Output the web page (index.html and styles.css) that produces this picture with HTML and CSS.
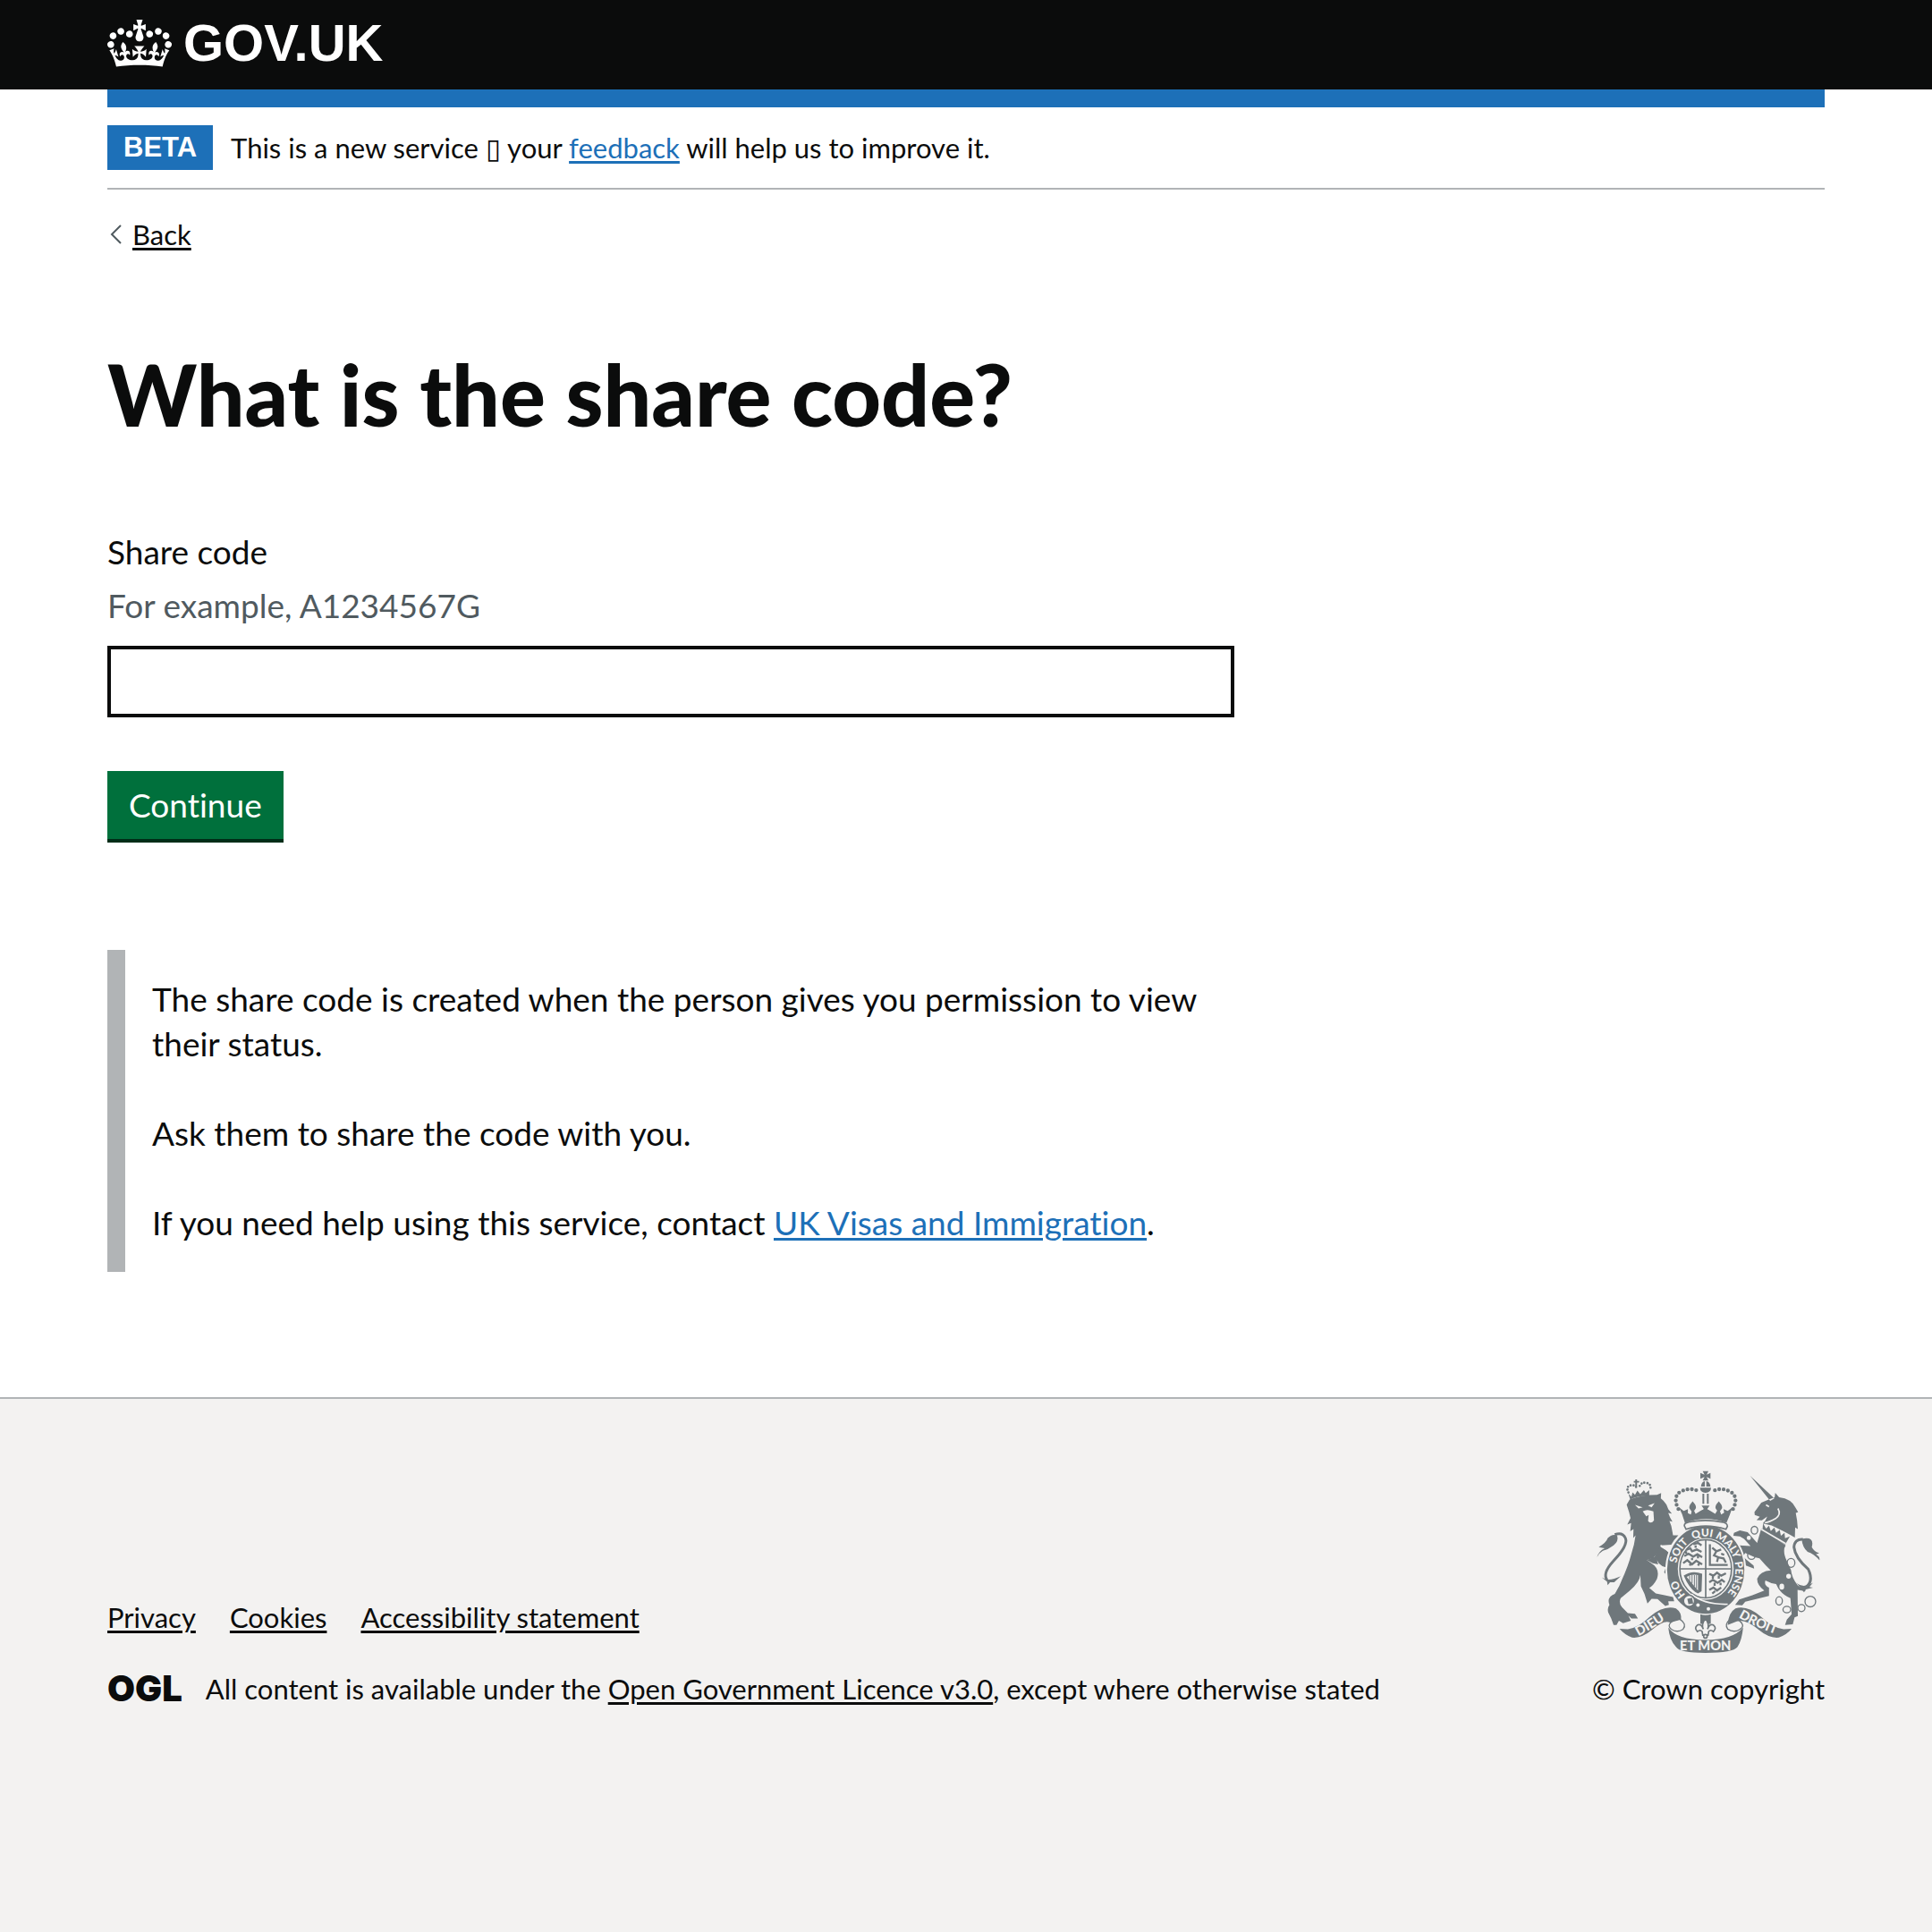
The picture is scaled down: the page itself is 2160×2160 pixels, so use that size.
FILE: index.html
```html
<!DOCTYPE html>
<html lang="en">
<head>
<meta charset="utf-8">
<meta name="viewport" content="width=device-width, initial-scale=1">
<title>What is the share code? - GOV.UK</title>
<link rel="stylesheet" href="styles.css">
</head>
<body>
<header class="header">
  <div class="container">
    <a class="header-logo" href="#">
      <svg class="crown" viewBox="0 0 132 97" aria-hidden="true"><path fill="currentColor" d="M25 30.2c3.5 1.5 7.7-.2 9.1-3.7 1.5-3.6-.2-7.8-3.9-9.2-3.6-1.4-7.6.3-9.1 3.9-1.4 3.5.3 7.5 3.9 9zM9 39.5c3.6 1.5 7.8-.2 9.2-3.7 1.5-3.6-.2-7.8-3.9-9.1-3.6-1.5-7.6.2-9.1 3.8-1.4 3.5.3 7.5 3.8 9zM4.4 57.2c3.5 1.5 7.7-.2 9.1-3.8 1.5-3.6-.2-7.7-3.9-9.1-3.5-1.5-7.6.3-9.1 3.8-1.4 3.5.3 7.6 3.9 9.1zm38.3-21.4c3.5 1.5 7.7-.2 9.1-3.8 1.5-3.6-.2-7.7-3.9-9.1-3.6-1.5-7.6.3-9.1 3.8-1.3 3.6.4 7.7 3.9 9.1zm64.4-5.6c-3.6 1.5-7.8-.2-9.1-3.7-1.5-3.6.2-7.8 3.8-9.2 3.6-1.4 7.7.3 9.2 3.9 1.3 3.5-.4 7.5-3.9 9zm15.9 9.3c-3.6 1.5-7.7-.2-9.1-3.7-1.5-3.6.2-7.8 3.7-9.1 3.6-1.5 7.7.2 9.2 3.8 1.5 3.5-.3 7.5-3.8 9zm4.7 17.7c-3.6 1.5-7.8-.2-9.2-3.8-1.5-3.6.2-7.7 3.9-9.1 3.6-1.5 7.7.3 9.2 3.8 1.3 3.5-.4 7.6-3.9 9.1zM89.3 35.8c-3.6 1.5-7.8-.2-9.2-3.8-1.4-3.6.2-7.7 3.9-9.1 3.6-1.5 7.7.3 9.2 3.8 1.4 3.6-.3 7.7-3.9 9.1zM69.7 17.7l8.9 4.7V9.3l-8.9 2.8c-.2-.3-.5-.6-.9-.9L72.4 0H59.6l3.5 11.2c-.3.3-.6.5-.9.9l-8.8-2.8v13.1l8.8-4.7c.3.3.6.7.9.9l-5 15.4v.1c-.2.8-.4 1.6-.4 2.4 0 4.1 3.1 7.5 7 8.1h.2c.3 0 .7.1 1 .1.4 0 .7 0 1-.1h.2c4-.6 7.1-4.1 7.1-8.1 0-.8-.1-1.7-.4-2.4V34l-5.1-15.4c.4-.2.7-.6 1-.9zM66 92.8c16.9 0 32.8 1.1 47.1 3.2 4-16.9 8.9-26.7 14-33.5l-9.6-3.4c1 4.9 1.1 7.2 0 10.2-1.5-1.4-3-4.3-4.2-8.7L108.6 76c2.8-2 5-3.2 7.5-3.3-4.4 9.4-10 11.9-13.6 11.2-4.3-.8-6.3-4.6-5.6-7.9 1-4.7 5.7-5.9 8-.5 4.3-8.7-3-11.4-7.6-8.8 7.1-7.2 7.9-13.5 2.1-21.1-8 6.1-8.1 12.3-4.5 20.8-4.7-5.4-12.1-2.5-9.5 6.2 3.4-5.2 7.9-2 7.2 3.1-.6 4.3-6.4 7.8-13.5 7.2-10.3-.9-10.9-8-11.2-13.8 2.5-.5 7.1 1.8 11 7.3L80.2 60c-4.1 4.4-8 5.3-12.3 5.4 1.4-4.4 8-11.6 8-11.6H55.5s6.4 7.2 7.9 11.6c-4.2-.1-8-1-12.3-5.4l1.4 16.4c3.9-5.5 8.5-7.7 10.9-7.3-.3 5.8-.9 12.8-11.1 13.8-7.2.6-12.9-2.9-13.5-7.2-.7-5 3.8-8.3 7.1-3.1 2.7-8.7-4.6-11.6-9.4-6.2 3.7-8.5 3.6-14.7-4.6-20.8-5.8 7.6-5 13.9 2.2 21.1-4.7-2.6-11.9.1-7.7 8.8 2.3-5.5 7.1-4.2 8.1.5.7 3.3-1.3 7.1-5.7 7.9-3.5.7-9-1.8-13.5-11.2 2.5.1 4.7 1.3 7.5 3.3l-4.7-15.4c-1.2 4.4-2.7 7.2-4.3 8.7-1.1-3-.9-5.3 0-10.2l-9.5 3.4c5 6.9 9.9 16.7 14 33.5 14.8-2.1 30.8-3.2 47.7-3.2z"/></svg>
      <span>GOV.UK</span>
    </a>
  </div>
</header>

<div class="page container">
  <div class="phase-banner">
    <strong class="tag">BETA</strong>
    <span>This is a new service <span class="missing">▯</span> your <a class="link" href="#">feedback</a> will help us to improve it.</span>
  </div>

  <a class="back" href="#">
    <svg class="back-arrow" viewBox="0 0 14 24" aria-hidden="true"><path d="M13 2 3 12l10 10" fill="none" stroke="currentColor" stroke-width="2"/></svg>
    <span class="back-text">Back</span>
  </a>

  <main class="content">
    <h1 class="title">What is the share code?</h1>
    <form class="form">
      <label class="label" for="share-code">Share code</label>
      <div class="hint" id="share-code-hint">For example, A1234567G</div>
      <input class="input" id="share-code" name="share-code" type="text" aria-describedby="share-code-hint">
      <button class="button" type="button">Continue</button>
    </form>
    <div class="inset">
      <p>The share code is created when the person gives you permission to view their status.</p>
      <p>Ask them to share the code with you.</p>
      <p>If you need help using this service, contact <a class="link" href="#">UK Visas and Immigration</a>.</p>
    </div>
  </main>
</div>

<footer class="footer">
  <div class="container footer-row">
    <div class="footer-meta">
      <nav class="footer-links" aria-label="Support links">
        <a href="#">Privacy</a>
        <a href="#">Cookies</a>
        <a href="#">Accessibility statement</a>
      </nav>
      <div class="licence">
        <span class="ogl">OGL</span>
        <span>All content is available under the <a href="#">Open Government Licence v3.0</a>, except where otherwise stated</span>
      </div>
    </div>
    <div class="copyright">
      <svg class="crest" viewBox="72 70 750 614" aria-hidden="true">
        <defs>
          <path id="garter" d="M438 518A100 113 0 0 1 438 292A100 113 0 0 1 438 518"/>
          <path id="dieu" d="M212 627Q255 605 325 557"/>
          <path id="droit" d="M548 564Q600 595 700 630"/>
        </defs>
        <!-- lion -->
        <g transform="translate(60 60)">
          <path class="ink" d="M112 125 122 108Q160 92 214 92L228 86 227 104Q238 112 246 125L252 140 264 155 252 153 258 168 266 182 256 180Q264 198 265 212L268 228 286 228 272 244 262 260 228 262Q218 290 200 305L180 312 192 320Q226 340 214 375 202 398 188 405L210 424 240 430 268 436 272 450 252 450 254 462 242 466 216 443 196 442 182 458 172 425 160 400 158 362Q156 385 122 415L92 440Q84 455 96 470L116 490 140 492 150 508 128 508 118 498 126 516 100 524 86 516 78 530 68 530 60 508 50 488Q46 474 54 462 44 436 72 425 88 400 95 380 118 330 128 290 138 260 142 228L134 237 135 207 124 215 127 187 114 192 125 170 120 150z"/>
          <path class="ink" d="M224 266Q272 292 282 322L288 352 284 372 274 362 266 370 258 356 246 362 238 352 244 336 232 332 220 322 214 312 218 326 200 322 180 312 206 300z"/>
          <path class="paper-line" d="M226 262Q266 282 292 334"/>
          <path class="paper" d="M140 126 166 134 152 138zM184 128 206 120 196 134zM166 148Q180 138 202 148L204 178Q194 192 184 180L186 160 178 164z"/>
          <path class="ink" d="M124 108 118 88 128 98 132 84 140 92 148 78 158 90 170 76 176 86 188 76 188 96Q150 94 124 108z"/>
          <path class="beads-s" d="M118 84Q108 64 126 60 138 58 144 66M156 62Q162 48 180 52 198 58 190 76"/>
          <path class="line" d="M144 40V64M136 48H154"/>
          <path class="tail" d="M46 378Q30 356 66 316 118 262 108 238 98 216 72 226"/>
          <path class="ink" d="M12 302Q18 282 38 272L18 268Q44 252 48 238 62 222 80 228 86 248 68 262 50 276 32 280 18 288 12 302zM28 370Q50 386 92 366L70 386 56 386 48 396 46 384z"/>
        </g>
        <!-- unicorn -->
        <g transform="translate(435 60)">
          <path class="ink" d="M152 27 220 112 234 104zM167 150 190 118 215 108 235 100 237 85 250 100Q292 105 305 135L314 150 306 153Q312 180 313 207L304 202 303 236Q286 226 265 215L225 195 195 188Q206 178 210 165L192 178 174 177 185 166 168 160z"/>
          <path class="paper-line" d="M246 138Q258 158 238 172 218 184 202 186M206 126 216 132"/>
          <path class="ink" d="M190 206Q230 232 272 262 260 280 276 315L290 345Q292 370 312 396L340 416 312 412 313 500 302 504 296 528 270 530 276 512 292 494 288 440Q252 424 240 392 222 390 204 380 198 396 216 404L216 432 136 452 126 464 102 462 116 444 160 430 200 414Q176 396 176 374 186 348 222 346 204 330 184 306L168 302 136 288 128 300 142 312 164 330 166 340 128 326 116 300 106 270 116 262 154 264 132 240 118 232 96 230 98 220 118 212 144 218 164 240 176 254z"/>
          <path class="ink" d="M194 210 196 188 206 206 216 196 222 214 234 202 240 220 252 210 256 230 268 220 270 238 286 232 270 260z"/>
          <path class="paper-line" d="M190 208 272 256"/>
          <path class="tail" d="M332 408Q370 388 348 342 304 304 300 268 302 240 330 242"/>
          <path class="ink" d="M326 240Q370 230 360 268 368 284 386 288L374 292Q388 300 386 312 366 290 346 284 328 268 326 240zM308 388Q330 408 364 388L352 402 364 404 340 410 334 420z"/>
        </g>
        <g class="ring">
          <ellipse cx="602" cy="271" rx="11" ry="13"/><ellipse cx="592" cy="355" rx="13" ry="14"/><ellipse cx="725" cy="381" rx="13" ry="15"/>
          <ellipse cx="685" cy="509" rx="11" ry="14"/><ellipse cx="711" cy="538" rx="13" ry="11"/><ellipse cx="760" cy="533" rx="12" ry="12"/><circle cx="790" cy="511" r="18"/>
        </g>
        <g class="paper"><circle cx="717" cy="426" r="8"/><ellipse cx="694" cy="461" rx="8" ry="10"/><circle cx="583" cy="297" r="7"/></g>
        <!-- garter and shield -->
        <ellipse class="paper" cx="438" cy="404" rx="136" ry="154"/>
        <ellipse class="ink" cx="438" cy="404" rx="130" ry="148"/>
        <ellipse class="paper" cx="438" cy="401" rx="94" ry="104"/>
        <ellipse class="shield-edge" cx="438" cy="401" rx="87" ry="98"/>
        <path class="shield-edge" d="M438 303V499M351 401H525"/>
        <path class="charge" d="M372 338 386 332 392 342 408 336 424 344M366 358 380 350 396 360 410 352 426 362M362 382 376 372 392 386 406 374 426 386M396 318 412 314 424 322M372 350V342M392 372V364M412 366V356M404 330V322M384 390 390 380M412 390 418 380"/>
        <path class="charge" d="M452 318V388H512M460 330 474 342 466 356 480 362 476 378M474 342 490 336M480 362 498 366 506 380M490 350 500 354"/>
        <path class="charge" d="M450 418 464 424 476 414 490 424 506 416M450 446 462 438 478 448 492 438 502 446M450 472 464 464 476 474 490 464M462 434V426M482 434V424M468 458V448M488 456V448M460 484 470 476"/>
        <path class="ink" fill-rule="evenodd" d="M364 424Q392 404 426 418L424 476 412 484Q384 472 364 424zM374 428 412 474V422Q392 418 374 428z"/>
        <path class="harp" d="M384 424V440M392 422V450M400 422V460M407 422V468"/>
        <text class="motto"><textPath href="#garter" startOffset="76">HO</textPath></text>
        <text class="motto"><textPath href="#garter" startOffset="190">SOIT</textPath></text>
        <text class="motto"><textPath href="#garter" startOffset="290">QUI</textPath></text>
        <text class="motto"><textPath href="#garter" startOffset="366">MAL</textPath></text>
        <text class="motto"><textPath href="#garter" startOffset="440">Y</textPath></text>
        <text class="motto"><textPath href="#garter" startOffset="474">PENSE</textPath></text>
        <path class="paper-line" d="M390 486Q430 522 512 520"/>
        <circle class="buckle" cx="382" cy="509" r="19"/>
        <path class="ink" d="M376 502 392 498 396 518 380 520z"/>
        <g class="paper"><circle cx="412" cy="523" r="6"/><circle cx="447" cy="536" r="6"/></g>
        <!-- royal crown -->
        <path class="paper" d="M360 240 340 200H536L514 240 508 262Q438 246 368 262z"/>
        <path class="ink" d="M348 194 364 206 378 200 378 214 388 218 394 196 404 216 420 206 437 198 454 206 470 216 482 196 490 218 500 212 498 200 512 206 528 194Q520 218 508 246 440 220 368 246 360 216 348 194z"/>
        <path class="ink" d="M394 174Q412 194 402 202L394 212 386 202Q376 194 394 174zM482 174Q500 194 490 202L482 212 474 202Q464 194 482 174zM424 188H451L443 200 452 206V216H422V206L432 200z"/>
        <path class="base" d="M366 256Q366 246 380 244 437 232 496 244 511 248 511 258L506 268Q437 246 372 268z"/>
        <path class="beads" d="M346 200Q326 160 352 142 388 124 418 142M530 200Q550 160 522 142 488 124 458 142"/>
        <path class="line" d="M430 148V182M445 148V182"/>
        <path class="ink" d="M419 128H456Q456 144 437 145 419 144 419 128zM422 124Q424 108 435 106V124zM440 106Q452 108 454 124H440zM428 72H447L441 84 454 78V98L441 92 447 104H428L434 92 420 98V78L434 84z"/>
        <!-- motto scroll -->
        <path class="ink" d="M148 603 176 604Q210 600 250 562 296 522 338 534 358 548 355 572L318 582Q298 572 258 606 222 636 190 632 166 624 148 603zM727 603 700 604Q664 600 624 562 578 522 538 534 514 548 512 590L548 576Q576 572 616 606 652 636 684 632 710 624 727 603z"/>
        <path class="curl" d="M350 570Q376 586 362 604 342 618 322 604 308 592 322 580 336 570 350 570zM520 570Q500 588 512 604 534 618 554 604 572 592 552 576z"/>
        <path class="ink" d="M312 598Q340 640 437 640 530 640 564 598 560 640 545 664 530 684 437 684 350 684 338 664 316 640 312 598z"/>
        <text class="scroll-text"><textPath href="#dieu">DIEU</textPath></text>
        <text class="scroll-text"><textPath href="#droit">DROIT</textPath></text>
        <text class="scroll-text" x="437" y="676" text-anchor="middle">ET MON</text>
        <path class="ink" d="M420 554Q437 560 455 554V586H420z"/>
        <path class="fleur" d="M437 568Q452 588 444 604 452 584 464 590 476 600 464 612 454 604 448 612L446 624H428L426 612Q420 604 410 612 398 600 410 590 422 584 430 604 422 588 437 568z"/>
        <circle class="fleur" cx="437" cy="628" r="6"/>
      </svg>
      <span>© Crown copyright</span>
    </div>
  </div>
</footer>
</body>
</html>
```
FILE: styles.css
```css
:root {
  --ink: #0b0c0c;
  --blue: #1d70b8;
  --border: #b1b4b6;
  --grey: #505a5f;
  --canvas: #f3f2f1;
  --crest: #6f777b;
}

* { box-sizing: border-box; }

body {
  margin: 0;
  display: flex;
  flex-direction: column;
  min-height: 100vh;
  color: var(--ink);
  background: #fff;
  font-family: Lato, "Liberation Sans", sans-serif;
  font-size: 31px;
  line-height: 40px;
  font-variant-ligatures: none;
}

a {
  color: inherit;
  text-decoration: underline;
  text-decoration-thickness: 3px;
  text-underline-offset: 3px;
}

.container { padding: 0 120px; }

.header { background: var(--ink); }

.header .container {
  display: flex;
  align-items: center;
  height: 100px;
  padding-bottom: 4px;
}

.header-logo {
  display: flex;
  align-items: center;
  gap: 13px;
  color: #fff;
  text-decoration: none;
  font: bold 58px/60px "Liberation Sans", Arial, sans-serif;
}

.crown { width: 72px; height: 53px; }

.phase-banner {
  display: flex;
  align-items: center;
  gap: 20px;
  padding: 20px 0;
  border-top: 20px solid var(--blue);
  border-bottom: 2px solid var(--border);
}

.tag {
  padding: 5px 18px;
  color: #fff;
  background: var(--blue);
  font-family: "Liberation Sans", Arial, sans-serif;
}

.missing { font-family: "DejaVu Sans", sans-serif; }

.link { color: var(--blue); }

.back {
  display: inline-flex;
  align-items: center;
  gap: 12px;
  margin-top: 30px;
  text-decoration: none;
}

.back-text {
  text-decoration: underline;
  text-decoration-thickness: 3px;
  text-underline-offset: 3px;
}

.back-arrow {
  width: 14px;
  height: 24px;
  margin-left: 2px;
  color: var(--grey);
}

.content {
  width: calc(66.6667% - 20px);
  padding: 110px 0 140px;
  font-size: 37px;
  line-height: 50px;
}

.title {
  margin: 0 0 104px;
  font-size: 95px;
  line-height: 96px;
  font-weight: 900;
}

.form {
  display: flex;
  flex-direction: column;
  align-items: flex-start;
}

.label { margin-bottom: 10px; }

.hint {
  margin-bottom: 20px;
  color: var(--grey);
}

.input {
  width: 100%;
  height: 80px;
  margin: 0 0 60px;
  padding: 10px;
  border: 4px solid var(--ink);
  border-radius: 0;
  background: #fff;
  font: inherit;
}

.button {
  height: 76px;
  padding: 0 24px;
  border: 0;
  color: #fff;
  background: #00703c;
  box-shadow: 0 4px 0 #002d18;
  font: inherit;
  font-variant-ligatures: none;
}

.inset {
  margin-top: 124px;
  padding: 30px;
  border-left: 20px solid var(--border);
}

.inset p { margin: 0 0 50px; }
.inset p:last-child { margin-bottom: 0; }

.footer {
  flex: 1;
  padding: 80px 0;
  border-top: 2px solid var(--border);
  background: var(--canvas);
}

.footer-row {
  display: flex;
  align-items: flex-end;
  justify-content: space-between;
}

.footer-meta {
  display: flex;
  flex-direction: column;
  gap: 40px;
}

.footer-links {
  display: flex;
  gap: 38px;
}

.licence {
  display: flex;
  align-items: center;
  gap: 26px;
}

.ogl {
  font: 900 40px/40px Inter, sans-serif;
}

.copyright {
  display: flex;
  flex-direction: column;
  align-items: center;
  gap: 20px;
}

.crest { width: 250px; height: 204px; }

.ink { fill: var(--crest); }
.paper { fill: var(--canvas); }

.paper-line, .line, .tail, .ring, .shield-edge, .charge, .harp, .curl, .beads, .beads-s {
  fill: none;
  stroke: var(--crest);
  stroke-width: 4px;
}

.paper-line { stroke: var(--canvas); stroke-width: 5px; }
.line { stroke-width: 6px; }
.tail { stroke-width: 9px; }
.shield-edge { stroke-width: 5px; }
.charge { stroke-width: 7px; }
.harp { stroke-width: 3px; }

.beads {
  stroke-width: 13px;
  stroke-linecap: round;
  stroke-dasharray: 0 15;
}

.beads-s {
  stroke-width: 8px;
  stroke-linecap: round;
  stroke-dasharray: 0 10;
}

.base, .buckle, .fleur {
  fill: var(--canvas);
  stroke: var(--crest);
  stroke-width: 5px;
}

.motto, .scroll-text {
  fill: var(--canvas);
  font: 900 36px Lato, sans-serif;
}

.scroll-text { font-size: 44px; }
```
